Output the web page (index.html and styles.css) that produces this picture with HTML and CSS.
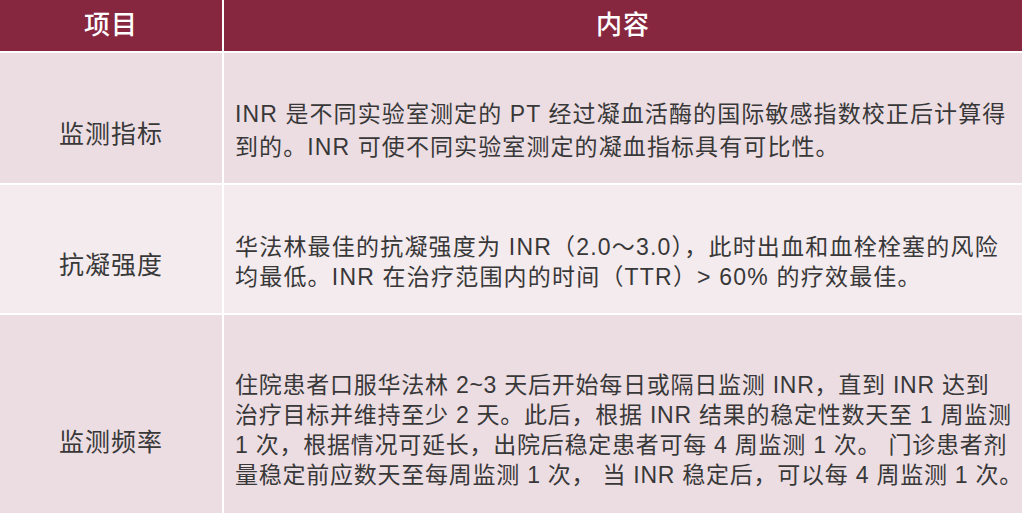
FILE: index.html
```html
<!DOCTYPE html>
<html lang="zh-CN">
<head>
<meta charset="utf-8">
<title>INR 监测</title>
<link rel="stylesheet" href="styles.css">
</head>
<body>
<div class="table">
  <div class="cell head">项目</div>
  <div class="cell head">内容</div>

  <div class="cell label odd">监测指标</div>
  <div class="cell content odd"><p class="lines loose">INR 是不同实验室测定的 PT 经过凝血活酶的国际敏感指数校正后计算得<br>到的。INR 可使不同实验室测定的凝血指标具有可比性。</p></div>

  <div class="cell label even">抗凝强度</div>
  <div class="cell content even"><p class="lines wide">华法林最佳的抗凝强度为 INR（2.0～3.0），此时出血和血栓栓塞的风险<br>均最低。INR 在治疗范围内的时间（TTR）&gt; 60% 的疗效最佳。</p></div>

  <div class="cell label odd low">监测频率</div>
  <div class="cell content odd low"><p class="lines">住院患者口服华法林 2~3 天后开始每日或隔日监测 INR，直到 INR 达到<br>治疗目标并维持至少 2 天。此后，根据 INR 结果的稳定性数天至 1 周监测<br>1 次，根据情况可延长，出院后稳定患者可每 4 周监测 1 次。 门诊患者剂<br>量稳定前应数天至每周监测 1 次， 当 INR 稳定后，可以每 4 周监测 1 次。</p></div>
</div>
</body>
</html>
```

FILE: styles.css
```css
html, body {
  margin: 0;
  padding: 0;
  background: #ffffff;
}

body {
  width: 1024px;
  height: 515px;
  overflow: hidden;
  font-family: "Liberation Sans", "Noto Sans CJK SC", sans-serif;
}

.table {
  display: grid;
  width: 1022px;
  grid-template-columns: 222px 798px;
  grid-template-rows: 51px 130px 128px 198px;
  column-gap: 2px;
  row-gap: 2px;
}

.cell {
  display: flex;
  align-items: center;
  box-sizing: border-box;
}

.head {
  background: #87263f;
  color: #ffffff;
  justify-content: center;
  font-family: "Noto Sans CJK SC", sans-serif;
  font-size: 26px;
  font-weight: 500;
  letter-spacing: 1px;
  padding-bottom: 6px;
}

.odd {
  background: #ecdde3;
}

.even {
  background: #f4ebef;
}

.label {
  justify-content: center;
  color: #383838;
  font-family: "Noto Sans CJK SC", sans-serif;
  font-size: 25px;
  letter-spacing: 1px;
  padding-top: 28px;
}

.label.low {
  padding-top: 52px;
}

.content {
  padding-left: 11px;
  padding-top: 26px;
  color: #383838;
}

.content.low {
  padding-top: 32px;
}

.lines {
  margin: 0;
  font-size: 23px;
  letter-spacing: 0.75px;
  line-height: 30px;
  white-space: nowrap;
}

.lines.loose {
  line-height: 33px;
  letter-spacing: 1.1px;
}

.lines.wide {
  letter-spacing: 1.2px;
}
```
